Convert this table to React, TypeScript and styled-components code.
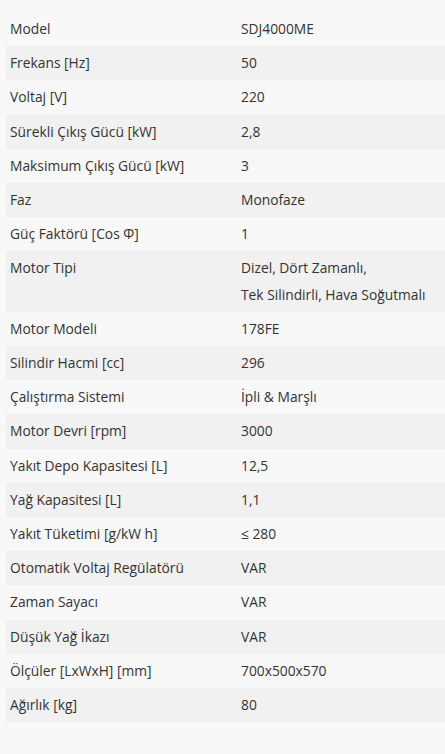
import React from "react";
import styled, { createGlobalStyle } from "styled-components";

const Global = createGlobalStyle`
  html, body {
    margin: 0;
    padding: 0;
    background: #f8f8f8;
  }
  body {
    font-family: "Open Sans", "Noto Sans", sans-serif;
  }
`;

const Page = styled.div`
  padding: 12px 0 30px 6px;
`;

const Table = styled.table`
  width: 100%;
  border-collapse: collapse;
  font-size: 13.8px;
  color: #333;
`;

const Row = styled.tr<{ $striped: boolean }>`
  background: ${(p) => (p.$striped ? "#f1f1f1" : "transparent")};
`;

const Label = styled.td`
  width: 223px;
  padding: 4px 4px;
  line-height: 26.2px;
  vertical-align: top;
`;

const Value = styled.td`
  padding: 4px 4px;
  line-height: 26.2px;
  vertical-align: top;
`;

const rows: [string, React.ReactNode][] = [
  ["Model", "SDJ4000ME"],
  ["Frekans [Hz]", "50"],
  ["Voltaj [V]", "220"],
  ["Sürekli Çıkış Gücü [kW]", "2,8"],
  ["Maksimum Çıkış Gücü [kW]", "3"],
  ["Faz", "Monofaze"],
  ["Güç Faktörü [Cos Φ]", "1"],
  [
    "Motor Tipi",
    <>
      Dizel, Dört Zamanlı,
      <br />
      Tek Silindirli, Hava Soğutmalı
    </>,
  ],
  ["Motor Modeli", "178FE"],
  ["Silindir Hacmi [cc]", "296"],
  ["Çalıştırma Sistemi", "İpli & Marşlı"],
  ["Motor Devri [rpm]", "3000"],
  ["Yakıt Depo Kapasitesi [L]", "12,5"],
  ["Yağ Kapasitesi [L]", "1,1"],
  ["Yakıt Tüketimi [g/kW h]", "≤ 280"],
  ["Otomatik Voltaj Regülatörü", "VAR"],
  ["Zaman Sayacı", "VAR"],
  ["Düşük Yağ İkazı", "VAR"],
  ["Ölçüler [LxWxH] [mm]", "700x500x570"],
  ["Ağırlık [kg]", "80"],
];

export default function App() {
  return (
    <>
      <Global />
      <Page>
        <Table>
          <tbody>
            {rows.map(([k, v], i) => (
              <Row key={k} $striped={i % 2 === 1}>
                <Label>{k}</Label>
                <Value>{v}</Value>
              </Row>
            ))}
          </tbody>
        </Table>
      </Page>
    </>
  );
}
